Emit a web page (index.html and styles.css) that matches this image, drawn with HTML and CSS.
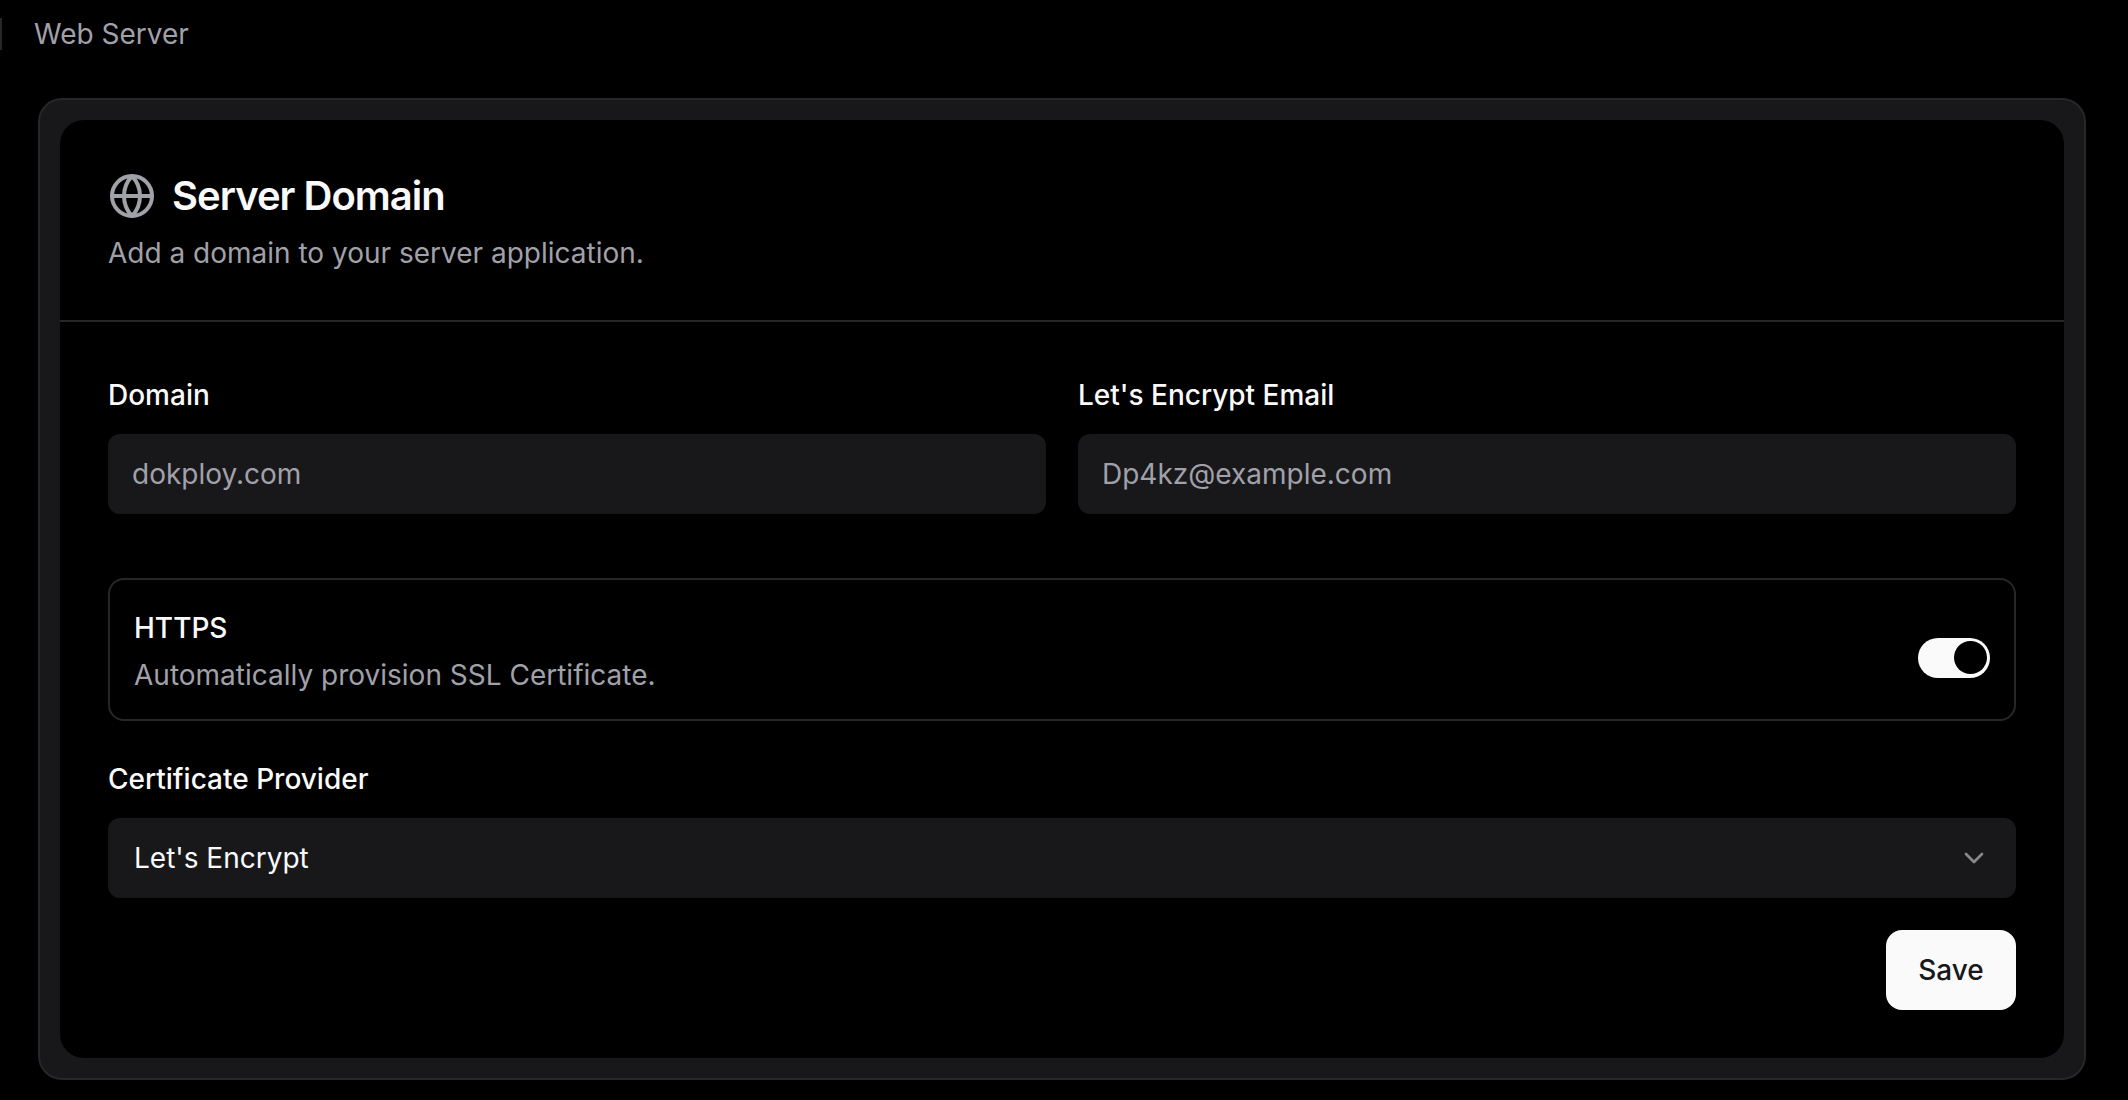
FILE: index.html
```html
<!DOCTYPE html>
<html lang="en">
<head>
<meta charset="utf-8">
<title>Web Server</title>
<link rel="stylesheet" href="styles.css">
</head>
<body>
<header class="topbar">
  <span class="separator"></span>
  <span class="crumb">Web Server</span>
</header>
<main class="outer-card">
  <section class="inner-card">
    <div class="card-head">
      <h1 class="title">
        <svg class="globe" viewBox="0 0 24 24" fill="none" stroke="currentColor" stroke-width="2" stroke-linecap="round" stroke-linejoin="round"><circle cx="12" cy="12" r="10"/><path d="M12 2a14.5 14.5 0 0 0 0 20 14.5 14.5 0 0 0 0-20"/><path d="M2 12h20"/></svg>
        <span>Server Domain</span>
      </h1>
      <p class="subtitle">Add a domain to your server application.</p>
    </div>
    <form class="card-body">
      <div class="field-grid">
        <div class="field">
          <label class="label">Domain</label>
          <div class="input placeholder">dokploy.com</div>
        </div>
        <div class="field">
          <label class="label">Let's Encrypt Email</label>
          <div class="input placeholder">Dp4kz@example.com</div>
        </div>
      </div>
      <div class="switch-row">
        <div class="switch-copy">
          <div class="switch-title">HTTPS</div>
          <div class="switch-desc">Automatically provision SSL Certificate.</div>
        </div>
        <span class="switch"><span class="thumb"></span></span>
      </div>
      <div class="field provider">
        <label class="label">Certificate Provider</label>
        <div class="input select">
          <span>Let's Encrypt</span>
          <svg class="chevron" viewBox="0 0 24 24" fill="none" stroke="currentColor" stroke-width="2" stroke-linecap="round" stroke-linejoin="round"><path d="m6 9 6 6 6-6"/></svg>
        </div>
      </div>
      <div class="actions"><button class="save" type="button">Save</button></div>
    </form>
  </section>
</main>
</body>
</html>
```
FILE: styles.css
```css
* { box-sizing: border-box; }
html, body { margin: 0; height: 1100px; overflow: hidden; background: #000; }
body { font-family: Inter, "Liberation Sans", sans-serif; font-size: 28px; color: #fafafa; }
.topbar { height: 98px; display: flex; align-items: flex-start; gap: 32px; padding-top: 18px; }
.separator { width: 2px; height: 32px; background: #27272a; }
.crumb { color: #a1a1aa; line-height: 32px; }
.outer-card { margin-left: 38px; width: 2048px; height: 982px; padding: 20px; background: #18181b; border: 2px solid #27272a; border-radius: 24px; }
.inner-card { height: 938px; background: #000; border-radius: 24px; overflow: hidden; }
.card-head { height: 202px; padding: 52px 48px 0; border-bottom: 2px solid #27272a; }
.title { margin: 0; display: flex; align-items: center; gap: 16px; font-size: 40px; line-height: 48px; font-weight: 600; letter-spacing: -1px; color: #fafafa; }
.globe { width: 48px; height: 48px; color: #a1a1aa; flex: none; }
.subtitle { margin: 13px 0 0; color: #a1a1aa; line-height: 40px; }
.card-body { padding: 59px 48px 0; }
.field-grid { display: grid; grid-template-columns: 1fr 1fr; gap: 32px; }
.field { display: flex; flex-direction: column; gap: 25px; }
.label { font-weight: 500; line-height: 28px; }
.input { height: 80px; background: #18181b; border-radius: 12px; display: flex; align-items: center; padding: 0 24px; }
.placeholder { color: #a1a1aa; }
.switch-row { margin-top: 64px; height: 143px; border: 2px solid #27272a; border-radius: 16px; padding: 34px 24px 0; display: flex; align-items: flex-start; justify-content: space-between; }
.switch-title { font-weight: 500; line-height: 28px; }
.switch-desc { margin-top: 13px; color: #a1a1aa; line-height: 40px; }
.switch { width: 72px; height: 40px; margin-top: 24px; border-radius: 20px; background: #fafafa; padding: 3px; display: flex; justify-content: flex-end; }
.thumb { width: 33px; height: 33px; border-radius: 50%; background: #000; }
.provider { margin-top: 44px; }
.select { justify-content: space-between; padding: 0 26px; }
.chevron { width: 32px; height: 32px; color: #fafafa; opacity: .5; }
.actions { display: flex; justify-content: flex-end; margin-top: 32px; }
.save { width: 130px; height: 80px; border: 0; border-radius: 16px; background: #fafafa; color: #18181b; font: 500 28px Inter, "Liberation Sans", sans-serif; }
```
